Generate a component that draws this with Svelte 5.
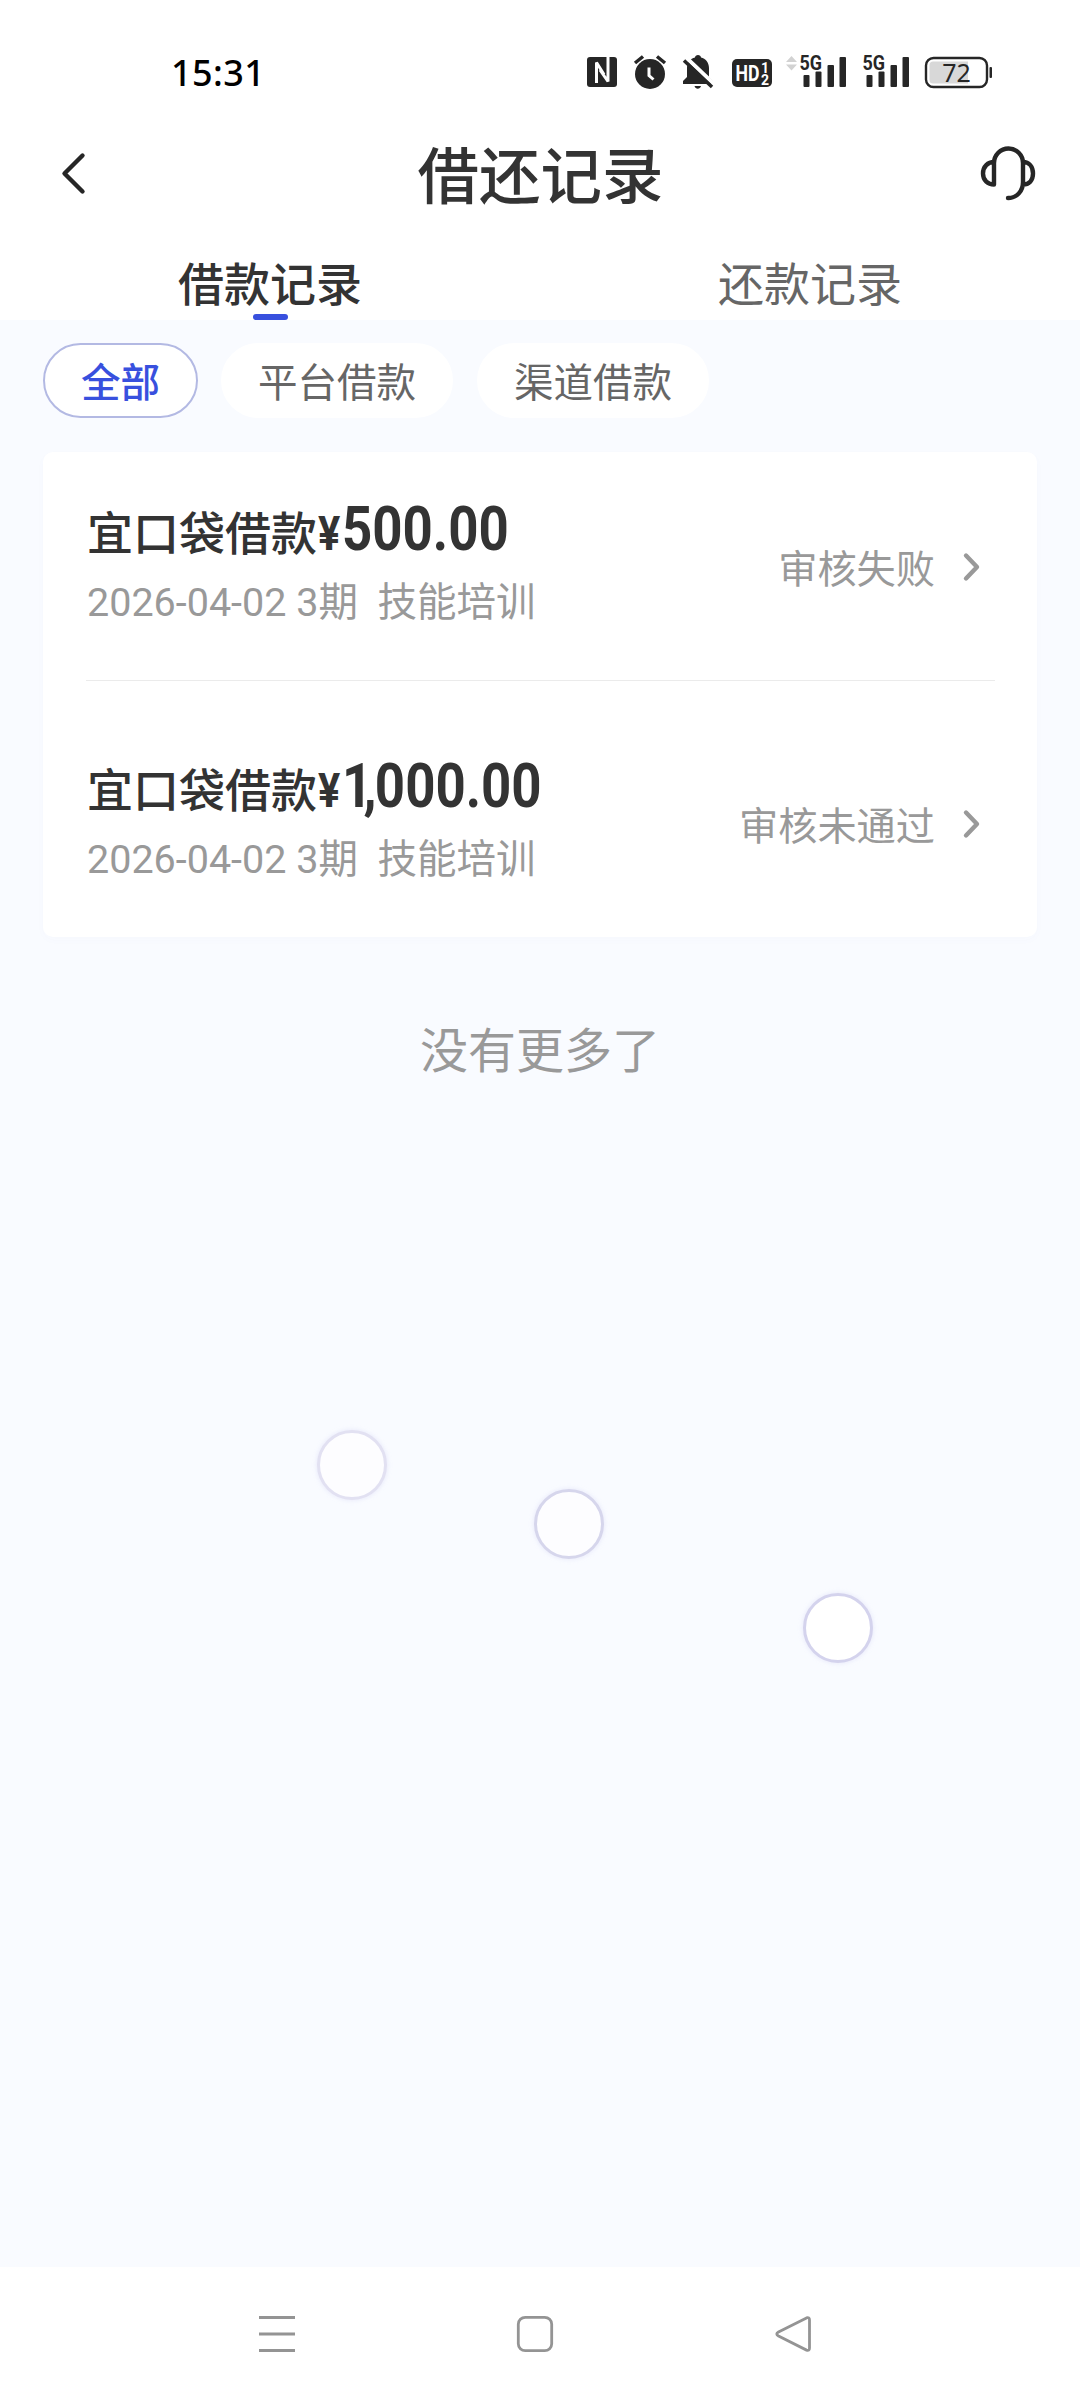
<script lang="ts">
    type LoanRecord = {
        name: string;
        amount: string;
        date: string;
        periods: string;
        usage: string;
        status: string;
    };

    const tabs = ["借款记录", "还款记录"];
    const filters = ["全部", "平台借款", "渠道借款"];

    const records: LoanRecord[] = [
        {
            name: "宜口袋借款",
            amount: "500.00",
            date: "2026-04-02",
            periods: "3期",
            usage: "技能培训",
            status: "审核失败",
        },
        {
            name: "宜口袋借款",
            amount: "1,000.00",
            date: "2026-04-02",
            periods: "3期",
            usage: "技能培训",
            status: "审核未通过",
        },
    ];

    let activeTab = $state(0);
    let activeFilter = $state(0);
</script>

<div class="screen">
    <div class="status-bar">
        <span class="time">15:31</span>
        <svg class="status-icons" width="412" height="40" viewBox="584 52 412 40">
            <!-- NFC -->
            <rect x="587" y="57" width="30" height="30" rx="3" fill="#262626" />
            <path
                d="M596.500 83V62.500L604 74.500M608 57V81.500L600 70"
                fill="none"
                stroke="#fff"
                stroke-width="3"
                stroke-linejoin="bevel"
            />
            <!-- Alarm -->
            <circle cx="650" cy="74" r="15" fill="#262626" />
            <path d="M635 63l8-6.500M665 63l-8-6.500" stroke="#262626" stroke-width="3.500" />
            <path d="M649 67.500v8l4.500 4" fill="none" stroke="#fff" stroke-width="3" />
            <!-- Muted bell -->
            <path
                d="M683 84v-3l4-4v-9c0-5.500 3.500-9.500 8-10.500 0-3.500 6-3.500 6 0 4.500 1 8 5 8 10.500v9l4 4v3zM694.500 86h6.500c-1 3.500-5.500 3.500-6.500 0z"
                fill="#262626"
            />
            <path d="M686 57.500l28.500 27" stroke="#fff" stroke-width="4" />
            <path d="M684 60.500l28 26.500" stroke="#262626" stroke-width="3.500" />
            <!-- HD voice on both SIMs -->
            <rect x="732" y="59" width="40" height="28" rx="5" fill="#262626" />
            <text class="hd" x="735.500" y="81" textLength="24" lengthAdjust="spacingAndGlyphs">HD</text>
            <text class="sim" x="761" y="72.500">1</text>
            <text class="sim" x="761" y="85">2</text>
            <!-- Data activity -->
            <path d="M786 62l5.500-6 5.500 6zM786 64.500h11l-5.500 6z" fill="#d2d2d2" />
            {#each [0, 63] as shift}
                <g transform="translate({shift} 0)">
                    <g fill="#262626">
                        <rect x="803.500" y="75" width="6" height="12" rx="1" />
                        <rect x="815.500" y="71.500" width="6" height="15.500" rx="1" />
                        <rect x="827.500" y="65" width="6.500" height="22" rx="1" />
                        <rect x="839.500" y="57" width="6.500" height="30" rx="1" />
                    </g>
                    <text class="net" x="799.500" y="70" textLength="22.500" lengthAdjust="spacingAndGlyphs">5G</text>
                </g>
            {/each}
            <!-- Battery -->
            <rect x="926" y="58" width="61" height="29" rx="7.500" fill="#fff" stroke="#262626" stroke-width="2.400" />
            <path d="M933 61.500h35v22h-35a3.500 3.500 0 0 1-3.500-3.500v-15a3.500 3.500 0 0 1 3.500-3.500z" fill="#d8d8d8" />
            <rect x="989.500" y="67" width="2.500" height="11" rx="1" fill="#262626" />
            <text class="level" x="956.500" y="81.500" text-anchor="middle">72</text>
        </svg>
    </div>

    <header class="nav">
        <button class="icon-btn" aria-label="返回">
            <svg width="32" height="48" viewBox="0 0 32 48">
                <path d="M24.500 6.500L6.500 24.500l18 18" class="line" />
            </svg>
        </button>
        <h1>借还记录</h1>
        <button class="icon-btn" aria-label="客服">
            <svg width="58" height="58" viewBox="0 0 58 58">
                <path
                    d="M15 40.500V19a14.500 14.500 0 0 1 29 0V38c0 9-6 16-15 16M15 18c-6 0-11 4.500-11 11.500s5 11 11 11M44 18c6 0 10 4.500 10 11.500s-4 11-10 11"
                    class="line"
                />
            </svg>
        </button>
    </header>

    <nav class="tabs">
        {#each tabs as tab, i}
            <button class="tab" class:active={i === activeTab} onclick={() => (activeTab = i)}>
                <span>{tab}</span>
                <i class="indicator"></i>
            </button>
        {/each}
    </nav>

    <main>
        <div class="filters">
            {#each filters as filter, i}
                <button class="chip" class:active={i === activeFilter} onclick={() => (activeFilter = i)}>
                    {filter}
                </button>
            {/each}
        </div>

        <section class="card">
            {#each records as record}
                <div class="record">
                    <div class="info">
                        <div class="title">
                            {record.name}<span class="amount"
                                ><small>¥</small>{#each record.amount.split("") as char}<span
                                        class:one={char === "1"}
                                        class:comma={char === ","}>{char}</span
                                    >{/each}</span
                            >
                        </div>
                        <div class="detail">{record.date} {record.periods}&nbsp; {record.usage}</div>
                    </div>
                    <div class="status">
                        <span>{record.status}</span>
                        <svg width="20" height="32" viewBox="0 0 20 32">
                            <path d="M4 4.500L15 16 4 27.500" />
                        </svg>
                    </div>
                </div>
            {/each}
        </section>

        <p class="end">没有更多了</p>

        <span class="touch first"></span>
        <span class="touch second"></span>
        <span class="touch third"></span>
    </main>

    <footer class="system-nav">
        <svg width="40" height="40" viewBox="0 0 40 40">
            <path d="M2 3.500h36M2 20h36M2 36.500h36" />
        </svg>
        <svg width="40" height="40" viewBox="0 0 40 40">
            <rect x="3.300" y="3.300" width="33.400" height="33.400" rx="7" />
        </svg>
        <svg width="40" height="40" viewBox="0 0 40 40">
            <path d="M33.500 3.900L5.500 18q-3.500 2 0 4l28 14.100q3 1 3-2V5.900q0-3-3-2z" />
        </svg>
    </footer>
</div>

<style>
    :global(body) {
        margin: 0;
        background: #fff;
    }

    .screen {
        display: flex;
        flex-direction: column;
        width: 1080px;
        height: 2400px;
        overflow: hidden;
        background: #fff;
        color: #333;
        font-family: "Noto Sans CJK SC", sans-serif;
    }

    button {
        margin: 0;
        padding: 0;
        border: none;
        background: none;
        color: inherit;
        font: inherit;
    }

    .status-bar {
        display: flex;
        align-items: center;
        justify-content: space-between;
        box-sizing: border-box;
        height: 124px;
        padding: 20px 84px 0 171px;
    }

    .time {
        padding-top: 1px;
        color: #000;
        font: 500 36px/40px "Noto Sans", sans-serif;
        letter-spacing: 0.4px;
    }

    .status-icons text {
        fill: #262626;
        font-family: Roboto, sans-serif;
        font-weight: 700;
    }

    .status-icons .hd {
        fill: #fff;
        font-size: 22px;
    }

    .status-icons .sim {
        fill: #fff;
        font-size: 14px;
    }

    .status-icons .net {
        font-size: 21px;
        stroke: #fff;
        stroke-width: 2px;
        paint-order: stroke;
    }

    .status-icons .level {
        font-family: "Noto Sans", sans-serif;
        font-size: 25px;
        font-weight: 400;
    }

    .nav {
        display: flex;
        align-items: center;
        justify-content: space-between;
        height: 98px;
        padding: 0 43px 0 58px;
    }

    .nav .icon-btn {
        display: flex;
        width: 58px;
    }

    .nav .icon-btn:last-child {
        justify-content: flex-end;
    }

    .line {
        fill: none;
        stroke: #262626;
        stroke-width: 4.400;
        stroke-linecap: round;
        stroke-linejoin: round;
    }

    h1 {
        margin: 0 14px 0 0;
        font-size: 61.500px;
        font-weight: 500;
        line-height: 90px;
    }

    .tabs {
        display: flex;
        height: 98px;
    }

    .tab {
        display: flex;
        flex: 1;
        flex-direction: column;
        align-items: center;
        justify-content: flex-end;
        color: #666;
        font-size: 46px;
        line-height: 64px;
    }

    .tab.active {
        color: #333;
        font-weight: 500;
    }

    .indicator {
        width: 35px;
        height: 6px;
        margin-top: 1px;
        border-radius: 3px;
    }

    .tab.active .indicator {
        background: #3850de;
    }

    main {
        position: relative;
        flex: 1;
        padding: 23px 43px 0;
        background: #f9fbff;
    }

    .filters {
        display: flex;
        gap: 24px;
    }

    .chip {
        box-sizing: border-box;
        height: 75px;
        padding: 0 35px 2px;
        border: 2px solid #fff;
        border-radius: 38px;
        background: #fff;
        color: #666;
        font-size: 39.500px;
        line-height: 69px;
    }

    .chip.active {
        padding: 0 36px 2px;
        margin-right: -1px;
        border-color: #b3b9e3;
        color: #3850de;
        font-weight: 500;
    }

    .card {
        margin-top: 34px;
        border-radius: 10px;
        background: #fff;
        box-shadow: 0 3px 10px rgba(90, 80, 180, 0.02);
    }

    .record {
        display: flex;
        justify-content: space-between;
        margin: 0 42px 0 43px;
        padding: 46px 0 51px;
    }

    .record + .record {
        padding: 74px 0 51px;
        border-top: 1px solid #ebebeb;
    }

    .title {
        height: 64px;
        padding-left: 1px;
        font-size: 46px;
        font-weight: 500;
        line-height: 64px;
        white-space: nowrap;
    }

    .amount {
        display: inline-block;
        margin-left: 1px;
        font-family: Roboto, sans-serif;
        font-size: 61px;
        font-weight: 700;
        line-height: 1;
        transform: scaleX(0.865);
        transform-origin: left;
    }

    .amount small {
        margin-right: 2px;
        font-size: 48px;
    }

    /* the "1" and the comma sit tighter than the other figures */
    .amount .one {
        letter-spacing: -10px;
    }

    .amount .comma {
        letter-spacing: -2px;
    }

    .detail {
        margin-top: 15px;
        padding-left: 1px;
        color: #999;
        font-family: Roboto, "Noto Sans CJK SC", sans-serif;
        font-size: 39.500px;
        line-height: 52px;
        white-space: nowrap;
    }

    .status {
        display: flex;
        align-items: center;
        gap: 27px;
        margin-right: 13px;
        padding-top: 7px;
        color: #999;
        font-size: 39.200px;
        line-height: 56px;
    }

    .status span {
        margin-top: -2px;
    }

    .status svg {
        fill: none;
        stroke: #999;
        stroke-width: 4.400;
        stroke-linecap: round;
        stroke-linejoin: round;
    }

    .end {
        margin: 75px 0 0;
        color: #999;
        font-size: 48px;
        line-height: 70px;
        text-align: center;
    }

    .touch {
        position: absolute;
        box-sizing: border-box;
        width: 70px;
        height: 70px;
        border: 3.500px solid #e2e1f2;
        border-radius: 50%;
        background: #fdfdff;
        box-shadow: 0 0 5px rgba(200, 200, 240, 0.4);
    }

    .touch.first {
        top: 1110px;
        left: 317px;
    }

    .touch.second {
        top: 1169px;
        left: 534px;
        border-color: #d6d6ec;
    }

    .touch.third {
        top: 1273px;
        left: 803px;
        border-color: #d4d3ed;
        background: #fff;
    }

    .system-nav {
        display: flex;
        align-items: center;
        justify-content: space-between;
        box-sizing: border-box;
        height: 133px;
        padding: 0 267px 0 257px;
    }

    .system-nav svg {
        fill: none;
        stroke: #949494;
        stroke-width: 2.800;
    }
</style>
